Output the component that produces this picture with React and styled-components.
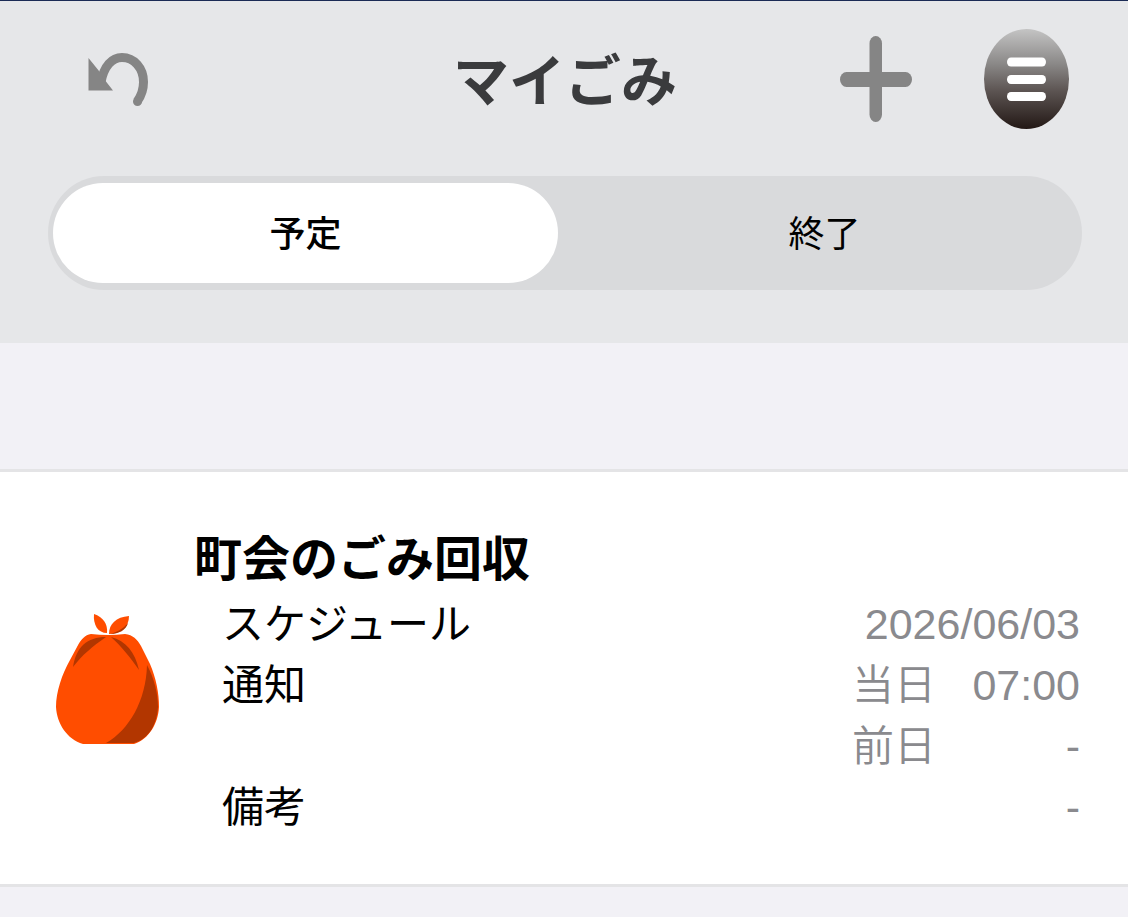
import { useState } from "react";
import styled, { createGlobalStyle } from "styled-components";

const GlobalStyle = createGlobalStyle`
* {
  box-sizing: border-box;
}

body {
  margin: 0;
  background: #f2f1f6;
  color: #000;
  font-family: "Noto Sans CJK JP", sans-serif;
}
`;

const UndoIcon = () => (
  <svg width="62" height="56" viewBox="0 0 62 56" aria-hidden="true">
    <path d="M13 31C16 15 24 6.500 34 6.500C46 6.500 55.500 17 55.500 31C55.500 39 53 45 49.500 50" fill="none" stroke="#858585" strokeWidth="9" />
    <circle cx="49.500" cy="50.500" r="4.500" fill="#858585" />
    <path d="M0.500 7L11 20L16 28L25 39.500H0.500Z" fill="#858585" />
  </svg>
);

const PlusIcon = () => (
  <svg width="72" height="86" viewBox="0 0 72 86" aria-hidden="true">
    <rect x="0" y="36" width="72" height="15" rx="6.500" ry="7.500" fill="#858585" />
    <rect x="29.500" y="0" width="12.500" height="86" rx="6.200" ry="7.500" fill="#858585" />
  </svg>
);

const MenuIcon = () => (
  <svg width="40" height="44" viewBox="0 0 40 44" aria-hidden="true">
    <rect x="0" y="0.500" width="39" height="9" rx="4" ry="4.500" fill="#fff" />
    <rect x="0" y="18" width="39" height="9" rx="4" ry="4.500" fill="#fff" />
    <rect x="0" y="35" width="39" height="9" rx="4" ry="4.500" fill="#fff" />
  </svg>
);

const BagIcon = () => (
  <svg width="106" height="134" viewBox="0 -2 106 134" aria-hidden="true">
    <path d="M39 1C48 4 53 11 52 20C43 20 38 12 39 1Z" fill="#ff4d00" />
    <path d="M74 3C74 14 66 21 54 21C54 11 61 4 74 3Z" fill="#ff4d00" />
    <path d="M73 10C71 17 64 21 55 21C62 19 68 16 73 10Z" fill="#b23600" />
    <path d="M36 21Q53 23 70 21C78 22 82 26 86 33L95 51C101 65 104 80 104 94C103 111 94 126 79 131H28C12 126 2 111 1 94C1 79 7 61 15 47L22 34C26 26 30 22 36 21Z" fill="#ff4d00" />
    <path d="M51 24C38 33 27 42 18 54C21 34 32 24 51 24Z" fill="#b23600" />
    <path d="M56 24C71 28 80 39 84 57C75 44 67 34 56 24Z" fill="#b23600" />
    <path d="M92 52C99 65 103 80 103 94C102 111 94 126 79 130H51C74 117 91 88 92 52Z" fill="#b23600" />
  </svg>
);

const details = [
  { label: "スケジュール", value: "2026/06/03" },
  { label: "通知", when: "当日", value: "07:00" },
  { label: "", when: "前日", value: "-" },
  { label: "備考", value: "-" },
];

const App = () => {
  const [tab, setTab] = useState("予定");

  return (
    <>
      <GlobalStyle />
      <Header>
        <TopBar>
          <BackButton aria-label="戻る"><UndoIcon /></BackButton>
          <PageTitle>マイごみ</PageTitle>
          <Actions>
            <IconButton aria-label="追加"><PlusIcon /></IconButton>
            <MenuButton aria-label="メニュー"><MenuIcon /></MenuButton>
          </Actions>
        </TopBar>
        <Segments role="tablist">
          {["予定", "終了"].map((name) => (
            <Segment
              key={name}
              role="tab"
              aria-selected={tab === name}
              $active={tab === name}
              onClick={() => setTab(name)}
            >
              {name}
            </Segment>
          ))}
        </Segments>
      </Header>
      <main>
        <Card>
          <BagIcon />
          <CardBody>
            <CardTitle>町会のごみ回収</CardTitle>
            <Details>
              {details.map((item, i) => (
                <Row key={i}>
                  <Label>{item.label}</Label>
                  <Value>
                    <span>{item.when}</span>
                    <Amount>{item.value}</Amount>
                  </Value>
                </Row>
              ))}
            </Details>
          </CardBody>
        </Card>
      </main>
    </>
  );
};

export default App;

const Header = styled.header`
  padding: 28px 46px 53px 48px;
  border-top: 1px solid #1b2b55;
  background: #e6e7e9;
`;

const TopBar = styled.div`
  display: grid;
  grid-template-columns: 1fr auto 1fr;
  align-items: center;
  height: 100px;
  padding: 0 13px;
  margin-bottom: 47px;
`;

const IconButton = styled.button`
  display: flex;
  justify-self: start;
  padding: 0;
  border: none;
  background: none;
  cursor: pointer;
`;

const BackButton = styled(IconButton)`
  padding-left: 27px;
`;

const MenuButton = styled(IconButton)`
  align-items: center;
  justify-content: center;
  width: 85px;
  height: 100px;
  border-radius: 50%;
  background: linear-gradient(#c4c4c4, #8a8887 35%, #5c5452 62%, #231815);
`;

const PageTitle = styled.h1`
  margin: 0;
  padding-bottom: 4px;
  color: #3a3b3d;
  font-size: 56px;
  line-height: 84px;
  font-weight: 700;
`;

const Actions = styled.div`
  display: flex;
  align-items: center;
  justify-content: flex-end;
  gap: 72px;
`;

const Segments = styled.div`
  display: grid;
  grid-template-columns: 1fr 1fr;
  gap: 14px;
  height: 114px;
  padding: 7px 5px;
  border-radius: 56px / 57px;
  background: #d9dadc;
`;

const Segment = styled.button`
  padding: 0 0 4px;
  border: none;
  border-radius: 50px;
  background: ${(props) => (props.$active ? "#fff" : "transparent")};
  color: #000;
  font-family: inherit;
  font-size: 36px;
  font-weight: ${(props) => (props.$active ? 500 : 400)};
  cursor: pointer;
`;

const Card = styled.article`
  display: flex;
  align-items: center;
  gap: 33px;
  margin-top: 126px;
  padding: 49px 48px 50px 55px;
  border: solid #e4e4e6;
  border-width: 3px 0;
  background: #fff;
`;

const CardBody = styled.div`
  flex: 1;
`;

const CardTitle = styled.h2`
  margin: 0;
  font-size: 48px;
  line-height: 69px;
  font-weight: 700;
`;

const Details = styled.dl`
  margin: 0;
  padding-left: 28px;
`;

const Row = styled.div`
  display: flex;
  justify-content: space-between;
  height: 61px;
  font-size: 42px;
  line-height: 61px;
`;

const Label = styled.dt`
  font-weight: 400;
`;

const Value = styled.dd`
  display: flex;
  margin: 0;
  color: #8a8a8e;
  font-weight: 350;
`;

const Amount = styled.span`
  min-width: 144px;
  padding-top: 4px;
  font-family: "Liberation Sans", "Noto Sans CJK JP", sans-serif;
  font-size: 43px;
  text-align: right;
`;
